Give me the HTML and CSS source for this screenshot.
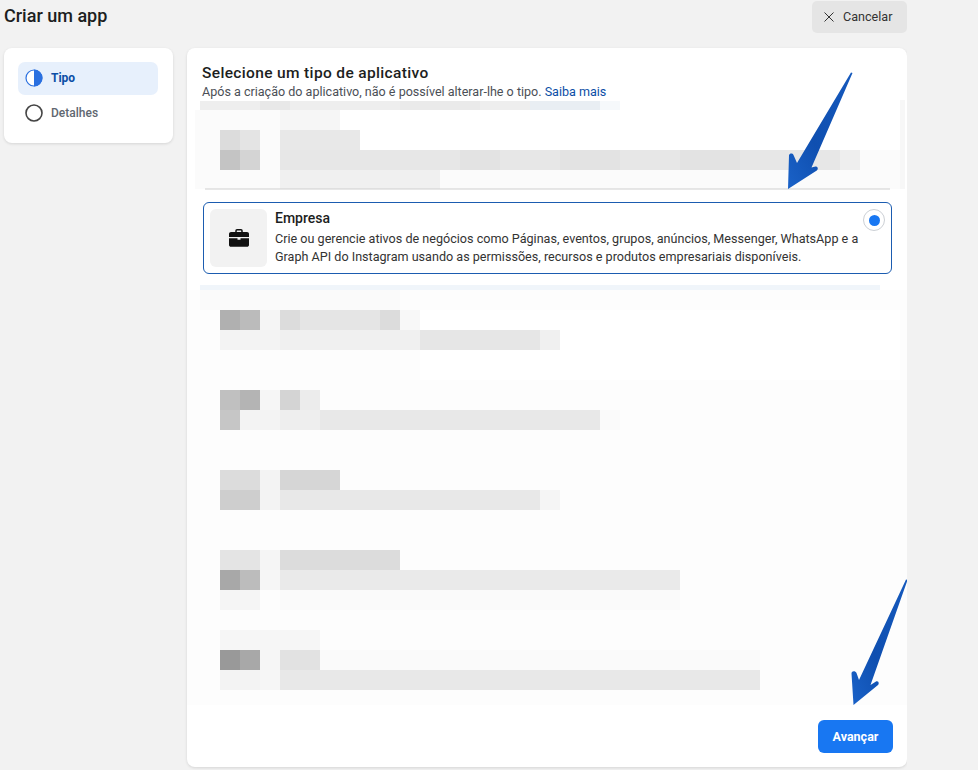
FILE: index.html
```html
<!DOCTYPE html>
<html lang="pt-BR">
<head>
<meta charset="utf-8">
<title>Criar um app</title>
<link rel="stylesheet" href="styles.css">
</head>
<body>
<header class="topbar">
  <h1 class="page-title">Criar um app</h1>
  <button class="cancel" type="button">
    <svg class="cancel-x" viewBox="0 0 10 10" width="10" height="10"><path d="M.5.500l9 9M9.500.500l-9 9" fill="none" stroke="#333" stroke-width="1"/></svg>
    <span>Cancelar</span>
  </button>
</header>
<div class="shell">
  <nav class="steps">
    <div class="step step-active">
      <svg class="step-icon" viewBox="0 0 18 18" width="18" height="18"><circle cx="9" cy="9" r="8" fill="#fff" stroke="#2a70e0" stroke-width="1.2"/><path d="M9 .6a8.4 8.4 0 0 1 0 16.8z" fill="#2a70e0"/></svg>
      <span>Tipo</span>
    </div>
    <span class="step-dots"><i></i><i></i></span>
    <div class="step step-next">
      <svg class="step-icon" viewBox="0 0 18 18" width="18" height="18"><circle cx="9" cy="9" r="8" fill="#fff" stroke="#444" stroke-width="1.6"/></svg>
      <span>Detalhes</span>
    </div>
  </nav>
  <main class="panel">
    <h2 class="panel-title">Selecione um tipo de aplicativo</h2>
    <p class="panel-sub">Após a criação do aplicativo, não é possível alterar-lhe o tipo. <a href="#">Saiba mais</a></p>

    <svg class="mosaic mosaic-top" viewBox="187 100 733 90" width="733" height="90" aria-hidden="true">
      <rect x="195" y="110" width="710" height="79" fill="#fbfbfb"/>
      <rect x="340" y="110" width="560" height="40" fill="#fff"/>
      <rect x="200" y="101" width="400" height="9" fill="#eeeeee"/>
      <rect x="260" y="101" width="30" height="9" fill="#e8e8e8"/>
      <rect x="400" y="101" width="80" height="9" fill="#eaeaea"/>
      <rect x="530" y="101" width="70" height="9" fill="#e9eef3"/>
      <rect x="600" y="101" width="20" height="9" fill="#f6f9fb"/>
      <rect x="280" y="110" width="60" height="20" fill="#f6f6f6"/>
      <rect x="220" y="130" width="20" height="20" fill="#dcdcdc"/>
      <rect x="240" y="130" width="20" height="20" fill="#e4e4e4"/>
      <rect x="220" y="150" width="20" height="20" fill="#c4c4c4"/>
      <rect x="240" y="150" width="20" height="20" fill="#d4d4d4"/>
      <rect x="280" y="130" width="80" height="20" fill="#e8e8e8"/>
      <rect x="280" y="150" width="580" height="20" fill="#e7e7e7"/>
      <rect x="460" y="150" width="40" height="20" fill="#e3e3e3"/>
      <rect x="560" y="150" width="60" height="20" fill="#e3e3e3"/>
      <rect x="680" y="150" width="60" height="20" fill="#e3e3e3"/>
      <rect x="840" y="150" width="20" height="20" fill="#eeeeee"/>
      <rect x="280" y="170" width="160" height="19" fill="#f0f0f0"/>
      <rect x="900" y="100" width="5" height="89" fill="#f7f7f7"/>
      <path d="M205 189h685" stroke="#cfcfcf" stroke-width="1"/>
    </svg>

    <section class="option">
      <div class="option-tile">
        <svg viewBox="0 0 20 18" width="20" height="18"><path d="M7 3V1.800C7 1.200 7.400.800 8 .800h4c.6 0 1 .4 1 1V3" fill="none" stroke="#111" stroke-width="1.500"/><path d="M2 3h16c1 0 2 .8 2 1.800V8H0V4.800C0 3.800 1 3 2 3z" fill="#111"/><path d="M0 9.200h8.500v1.600h3V9.200H20V16c0 1-.9 1.800-2 1.800H2C.9 17.800 0 17 0 16z" fill="#111"/></svg>
      </div>
      <div class="option-body">
        <h3 class="option-title">Empresa</h3>
        <p class="option-text">Crie ou gerencie ativos de negócios como Páginas, eventos, grupos, anúncios, Messenger, WhatsApp e a Graph API do Instagram usando as permissões, recursos e produtos empresariais disponíveis.</p>
      </div>
      <span class="radio"><i></i></span>
    </section>

    <svg class="mosaic mosaic-bottom" viewBox="187 285 733 420" width="733" height="420" aria-hidden="true">
      <rect x="187" y="290" width="720" height="415" fill="#fdfdfd"/>
      <rect x="907" y="290" width="13" height="413" fill="#f7f7f7"/>
      <rect x="200" y="285" width="680" height="5" fill="#f0f5fa"/>
      <rect x="200" y="290" width="200" height="20" fill="#fafafa"/>
      <rect x="420" y="310" width="480" height="70" fill="#fff"/>
      <rect x="220" y="310" width="20" height="20" fill="#b0b0b0"/>
      <rect x="240" y="310" width="20" height="20" fill="#bbbbbb"/>
      <rect x="260" y="310" width="20" height="20" fill="#f5f5f5"/>
      <rect x="280" y="310" width="20" height="20" fill="#dcdcdc"/>
      <rect x="300" y="310" width="80" height="20" fill="#e5e5e5"/>
      <rect x="380" y="310" width="20" height="20" fill="#dcdcdc"/>
      <rect x="400" y="310" width="20" height="20" fill="#f8f8f8"/>
      <rect x="220" y="330" width="60" height="20" fill="#f3f3f3"/>
      <rect x="280" y="330" width="140" height="20" fill="#f0f0f0"/>
      <rect x="420" y="330" width="120" height="20" fill="#e6e6e6"/>
      <rect x="540" y="330" width="20" height="20" fill="#f0f0f0"/>
      <rect x="220" y="390" width="20" height="20" fill="#c0c0c0"/>
      <rect x="240" y="390" width="20" height="20" fill="#b4b4b4"/>
      <rect x="260" y="390" width="20" height="20" fill="#f6f6f6"/>
      <rect x="280" y="390" width="20" height="20" fill="#d4d4d4"/>
      <rect x="300" y="390" width="20" height="20" fill="#ececec"/>
      <rect x="220" y="410" width="20" height="20" fill="#c6c6c6"/>
      <rect x="240" y="410" width="40" height="20" fill="#f3f3f3"/>
      <rect x="280" y="410" width="40" height="20" fill="#eeeeee"/>
      <rect x="320" y="410" width="280" height="20" fill="#e8e8e8"/>
      <rect x="600" y="410" width="20" height="20" fill="#fafafa"/>
      <rect x="220" y="470" width="40" height="20" fill="#dcdcdc"/>
      <rect x="260" y="470" width="20" height="20" fill="#f3f3f3"/>
      <rect x="280" y="470" width="60" height="20" fill="#d6d6d6"/>
      <rect x="220" y="490" width="40" height="20" fill="#cecece"/>
      <rect x="260" y="490" width="20" height="20" fill="#f3f3f3"/>
      <rect x="280" y="490" width="260" height="20" fill="#e8e8e8"/>
      <rect x="540" y="490" width="20" height="20" fill="#f5f5f5"/>
      <rect x="220" y="550" width="40" height="20" fill="#e4e4e4"/>
      <rect x="260" y="550" width="20" height="20" fill="#f5f5f5"/>
      <rect x="280" y="550" width="120" height="20" fill="#dcdcdc"/>
      <rect x="220" y="570" width="20" height="20" fill="#a8a8a8"/>
      <rect x="240" y="570" width="20" height="20" fill="#bcbcbc"/>
      <rect x="260" y="570" width="20" height="20" fill="#f6f6f6"/>
      <rect x="280" y="570" width="400" height="20" fill="#eaeaea"/>
      <rect x="220" y="590" width="40" height="20" fill="#f5f5f5"/>
      <rect x="280" y="590" width="400" height="20" fill="#fafafa"/>
      <rect x="220" y="630" width="100" height="20" fill="#f6f6f6"/>
      <rect x="220" y="650" width="20" height="20" fill="#999999"/>
      <rect x="240" y="650" width="20" height="20" fill="#a8a8a8"/>
      <rect x="260" y="650" width="20" height="20" fill="#f6f6f6"/>
      <rect x="280" y="650" width="40" height="20" fill="#e2e2e2"/>
      <rect x="320" y="650" width="440" height="20" fill="#fafafa"/>
      <rect x="220" y="670" width="40" height="20" fill="#f3f3f3"/>
      <rect x="260" y="670" width="20" height="20" fill="#f6f6f6"/>
      <rect x="280" y="670" width="480" height="20" fill="#e8e8e8"/>
    </svg>

    <footer class="panel-foot">
      <button class="next" type="button">Avançar</button>
    </footer>

    <svg class="arrow arrow-one" viewBox="0 0 70 120" width="70" height="120" aria-hidden="true">
      <defs><linearGradient id="arrowFill" x1="1" y1="0" x2="0" y2="1"><stop offset="0" stop-color="#1559bd"/><stop offset=".6" stop-color="#0f4fb0"/><stop offset="1" stop-color="#1a62c8"/></linearGradient></defs>
      <path d="M65.500 1L24.500 95.500 28.500 94.500C31 94.500 31.500 97 29.800 98.500L1 117 2 83.500C2.500 81 5.500 81 6.500 83L10 91 64 .5z" fill="url(#arrowFill)"/>
    </svg>
    <svg class="arrow arrow-two" viewBox="0 0 70 130" width="70" height="130" aria-hidden="true">
      <path d="M68.500 1L31.500 106 37 102.500C39.500 101.500 40.500 104.500 39 106L14.500 126 12.500 94.500C12.500 91.500 16.500 91.500 17.500 94L20 101 67 .5z" fill="url(#arrowFill)"/>
    </svg>
  </main>
</div>
</body>
</html>
```

FILE: styles.css
```css
* { box-sizing: border-box; }
html, body { margin: 0; height: 770px; overflow: hidden; }
body {
  padding: 1px 0 0 4px;
  width: 907px;
  background: #f2f2f2;
  font-family: Roboto, "Liberation Sans", sans-serif;
  color: #1c1e21;
}
.topbar {
  display: flex;
  justify-content: space-between;
  align-items: flex-start;
  height: 32px;
}
.page-title {
  margin: 4px 0 0;
  font-size: 18px;
  line-height: 21px;
  font-weight: 500;
}
.cancel {
  display: flex;
  align-items: center;
  gap: 9px;
  width: 95px;
  height: 32px;
  padding: 0 0 0 12px;
  border: 0;
  border-radius: 5px;
  background: #e5e5e5;
  font: 400 12.600px/16px Roboto, sans-serif;
  color: #333;
}
.shell {
  display: grid;
  grid-template-columns: 169px 720px;
  column-gap: 14px;
  margin-top: 15px;
  align-items: start;
}
.steps {
  display: flex;
  flex-direction: column;
  height: 95px;
  padding: 14px 15px 0 14px;
  border-radius: 8px;
  background: #fff;
  box-shadow: 0 1px 3px rgba(0, 0, 0, .12);
}
.step {
  display: flex;
  align-items: center;
  gap: 8px;
  height: 33px;
  padding-left: 7px;
  font-size: 12px;
  font-weight: 500;
  color: #606770;
}
.step-active {
  padding-bottom: 2px;
  border-radius: 7px;
  background: #e7f0fc;
  font-weight: 700;
  color: #0b4ea6;
}
.step-icon { flex: none; }
.step-dots {
  display: flex;
  flex-direction: column;
  gap: 4px;
  height: 0;
  margin: -5px 0 0 14px;
}
.step-dots i {
  display: block;
  width: 4px;
  height: 4px;
  border-radius: 50%;
  background: #c9d1db;
}
.step-next { margin-top: 12px; height: 22px; }
.panel {
  position: relative;
  height: 719px;
  padding: 16px 14px 0 15px;
  border-radius: 8px;
  background: #fff;
  box-shadow: 0 1px 3px rgba(0, 0, 0, .12);
}
.panel-title {
  margin: 0;
  font-size: 15.500px;
  line-height: 18px;
  font-weight: 500;
  letter-spacing: .35px;
}
.panel-sub {
  margin: 2px 0 0;
  font-size: 12.560px;
  line-height: 16px;
  color: #4b4f56;
}
.panel-sub a { color: #0b4ea6; text-decoration: none; }
.mosaic {
  display: block;
  margin-left: -15px;
  overflow: visible;
  filter: blur(.5px);
}
.option {
  position: relative;
  display: flex;
  gap: 8px;
  height: 72px;
  margin: 12px 1px 11px;
  padding: 6px 30px 0 6px;
  border: 1.500px solid #1b5cb0;
  border-radius: 6px;
  background: #fff;
}
.option-tile {
  flex: none;
  display: flex;
  align-items: center;
  justify-content: center;
  width: 57px;
  height: 58px;
  border-radius: 6px;
  background: #f2f2f2;
}
.option-body { min-width: 0; }
.option-title {
  margin: 1px 0 3px;
  font-size: 14px;
  line-height: 17px;
  font-weight: 500;
}
.option-text {
  margin: 0;
  font-size: 12.600px;
  line-height: 18px;
  color: #333;
  width: 595px;
}
.radio {
  position: absolute;
  top: 6px;
  right: 6px;
  display: flex;
  align-items: center;
  justify-content: center;
  width: 22px;
  height: 22px;
  border: 1px solid #ccd0d5;
  border-radius: 50%;
  background: #fff;
}
.radio i {
  width: 11px;
  height: 11px;
  border-radius: 50%;
  background: #1877f2;
}
.panel-foot {
  display: flex;
  justify-content: flex-end;
  margin-top: 15px;
}
.next {
  width: 75px;
  height: 33px;
  border: 0;
  border-radius: 6px;
  background: #1877f2;
  color: #fff;
  font: 700 12.500px/16px Roboto, sans-serif;
}
.arrow { position: absolute; overflow: visible; }
.arrow-one { left: 600px; top: 24px; }
.arrow-two { left: 652px; top: 531px; }
```
